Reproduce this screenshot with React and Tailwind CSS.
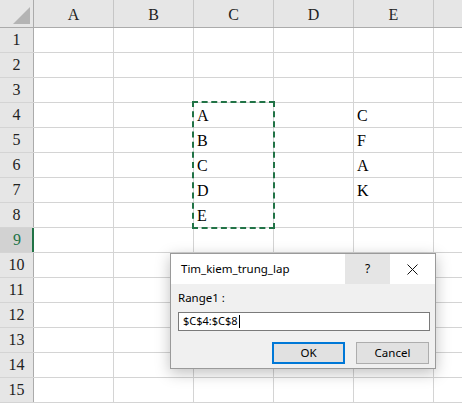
import React from "react";

const COLS = ["A", "B", "C", "D", "E", ""];
const DATA = {
  4: { C: "A", E: "C" },
  5: { C: "B", E: "F" },
  6: { C: "C", E: "A" },
  7: { C: "D", E: "K" },
  8: { C: "E" },
};

const serif = { fontFamily: '"Liberation Serif", "Times New Roman", serif' };

function HeaderRow() {
  return (
    <div className="flex h-[28px] border-b border-[#ababab] bg-[#e6e6e6]">
      <div className="relative w-[34px] shrink-0 border-r border-[#ababab]">
        <div className="absolute bottom-[3px] right-[3px] h-0 w-0 border-b-[17px] border-l-[17px] border-b-[#b4b4b4] border-l-transparent" />
      </div>
      {COLS.map((c, i) => (
        <div
          key={i}
          className="flex w-[80px] shrink-0 items-center justify-center border-r border-[#c6c6c6] pt-[2px] text-[16px] text-[#222]"
        >
          {c}
        </div>
      ))}
    </div>
  );
}

function Row({ n }) {
  const selected = n === 9;
  return (
    <div className="flex h-[25px] border-b border-[#d4d4d4]">
      <div
        className={
          selected
            ? "flex w-[34px] shrink-0 items-center justify-center border-r-2 border-[#217346] bg-[#d2d2d2] pl-[2px] text-[16px] text-[#217346]"
            : "flex w-[34px] shrink-0 items-center justify-center border-r border-[#ababab] bg-[#e6e6e6] text-[16px] text-[#222]"
        }
      >
        {n}
      </div>
      {COLS.map((c, i) => (
        <div
          key={i}
          className="flex w-[80px] shrink-0 items-end border-r border-[#d4d4d4] pb-[1px] pl-[3px] text-[16px] leading-[20px] text-black"
        >
          {c && DATA[n] ? DATA[n][c] : ""}
        </div>
      ))}
    </div>
  );
}

function Dialog() {
  return (
    <div
      className="absolute left-[170px] top-[253px] flex h-[116px] w-[266px] flex-col border border-[#9a9a9a] bg-[#f0f0f0] shadow-[0_4px_14px_rgba(0,0,0,0.25)]"
      style={{ fontFamily: '"Noto Sans", "Open Sans", sans-serif' }}
    >
      <div className="flex h-[30px] items-stretch bg-white">
        <div className="flex flex-1 items-center pl-[10px] text-[11.5px] text-black">
          Tim_kiem_trung_lap
        </div>
        <div className="flex w-[45px] items-center justify-center bg-[#e5e5e5] text-[12px] text-black">
          ?
        </div>
        <div className="flex w-[45px] items-center justify-center">
          <svg width="11" height="11" viewBox="0 0 11 11">
            <path d="M0.5 0.5 L10.5 10.5 M10.5 0.5 L0.5 10.5" stroke="#111" strokeWidth="1" />
          </svg>
        </div>
      </div>
      <div className="flex flex-col pl-[7px] pr-[6px] pt-[6px]">
        <div className="text-[11.5px] leading-[16px] text-black">Range1 :</div>
        <div className="mt-[6px] flex h-[19px] w-[252px] items-center border border-[#7a7a7a] bg-white pl-[4px] text-[11px] text-black">
          $C$4:$C$8
          <span className="ml-[1px] inline-block h-[13px] w-px bg-black" />
        </div>
        <div className="mt-[11px] flex justify-end gap-[11px]">
          <button className="flex h-[22px] w-[73px] items-center justify-center border-2 border-[#0078d7] bg-[#e1e1e1] text-[11.5px] text-black">
            OK
          </button>
          <button className="flex h-[22px] w-[73px] items-center justify-center border border-[#adadad] bg-[#e1e1e1] text-[11.5px] text-black">
            Cancel
          </button>
        </div>
      </div>
    </div>
  );
}

export default function App() {
  const rows = Array.from({ length: 15 }, (_, i) => i + 1);
  return (
    <div className="relative h-[403px] w-[462px] overflow-hidden bg-white" style={serif}>
      <HeaderRow />
      {rows.map((n) => (
        <Row key={n} n={n} />
      ))}
      <div className="pointer-events-none absolute left-[192px] top-[101px] h-[128px] w-[83px] border-2 border-dashed border-[#217346]" />
      <Dialog />
    </div>
  );
}
